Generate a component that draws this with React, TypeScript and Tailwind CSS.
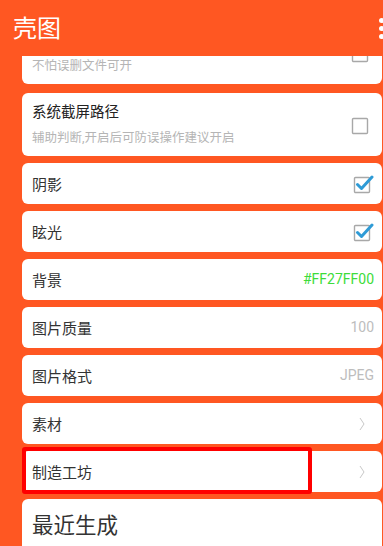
import React from 'react';

const font = { fontFamily: '"Roboto", "Noto Sans CJK SC", sans-serif' };

function Checkbox({ checked }: { checked?: boolean }) {
    return (
        <svg width="22" height="22" viewBox="0 0 22 22" className="shrink-0">
            <rect x="2.5" y="4.5" width="15" height="15" rx="1" fill="white" stroke="#a8a8a8" strokeWidth="1.4" />
            {checked && (
                <path d="M5.5 11.5 L9.5 15.5 L20 4" fill="none" stroke="#2f9bd6" strokeWidth="3" strokeLinecap="round" strokeLinejoin="round" />
            )}
        </svg>
    );
}

function Chevron() {
    return (
        <svg width="8" height="14" viewBox="0 0 8 14" className="shrink-0">
            <path d="M2 1 L6 7 L2 13" fill="none" stroke="#c8c8c8" strokeWidth="1" />
        </svg>
    );
}

function Row({ title, right, children }: { title: string; right?: React.ReactNode; children?: React.ReactNode }) {
    return (
        <div className="relative flex items-center justify-between h-[41px] bg-white rounded-[6px] pl-[10px] pr-[8px]">
            <span className="text-[15px] text-[#333] leading-none pt-[3px]">{title}</span>
            {right}
            {children}
        </div>
    );
}

export default function App() {
    return (
        <div className="w-[383px] h-[546px] bg-[#ff5722] overflow-hidden flex flex-col" style={font}>
            {/* Toolbar */}
            <div className="h-[56px] shrink-0 flex items-center justify-between pl-[13px]">
                <span className="text-white text-[24px] leading-none pt-[2px]">壳图</span>
                <div className="flex flex-col gap-[3px] mr-[-1px]">
                    <span className="w-[5px] h-[5px] rounded-full bg-white" />
                    <span className="w-[5px] h-[5px] rounded-full bg-white" />
                    <span className="w-[5px] h-[5px] rounded-full bg-white" />
                </div>
            </div>

            {/* Settings list, scrolled */}
            <div className="flex-1 overflow-hidden pl-[22px] pr-[1px]">
                <div className="flex flex-col gap-[7px] mt-[-34px]">
                    <div className="flex items-center justify-between h-[62px] bg-white rounded-[6px] pl-[10px] pr-[10px]">
                        <div className="flex flex-col">
                            <span className="h-[18px]" />
                            <span className="text-[12.5px] text-[#b5b5b5] leading-[16px] mt-[8px]">不怕误删文件可开</span>
                        </div>
                        <Checkbox />
                    </div>
                    <div className="flex items-center justify-between h-[63px] bg-white rounded-[6px] pl-[10px] pr-[10px] mt-[2px]">
                        <div className="flex flex-col">
                            <span className="text-[14.5px] text-[#222] leading-[18px]">系统截屏路径</span>
                            <span className="text-[12.5px] text-[#b5b5b5] leading-[16px] mt-[8px]">辅助判断,开启后可防误操作建议开启</span>
                        </div>
                        <Checkbox />
                    </div>
                    <Row title="阴影" right={<Checkbox checked />} />
                    <Row title="眩光" right={<Checkbox checked />} />
                    <Row title="背景" right={<span className="text-[14px] text-[#3ddc3a]">#FF27FF00</span>} />
                    <Row title="图片质量" right={<span className="text-[14px] text-[#bdbdbd]">100</span>} />
                    <Row title="图片格式" right={<span className="text-[14px] text-[#bdbdbd]">JPEG</span>} />
                    <Row title="素材" right={<span className="pr-[8px]"><Chevron /></span>} />
                    <Row title="制造工坊" right={<span className="pr-[8px]"><Chevron /></span>}>
                        {/* annotation box */}
                        <div className="absolute left-0 top-[-4px] w-[290px] h-[47px] border-[4px] border-[#ff0000] rounded-[3px]" />
                    </Row>
                    <div className="h-[60px] bg-white rounded-t-[6px] pl-[10px] pt-[16px]">
                        <span className="text-[21.5px] text-[#333] leading-none">最近生成</span>
                    </div>
                </div>
            </div>
        </div>
    );
}
